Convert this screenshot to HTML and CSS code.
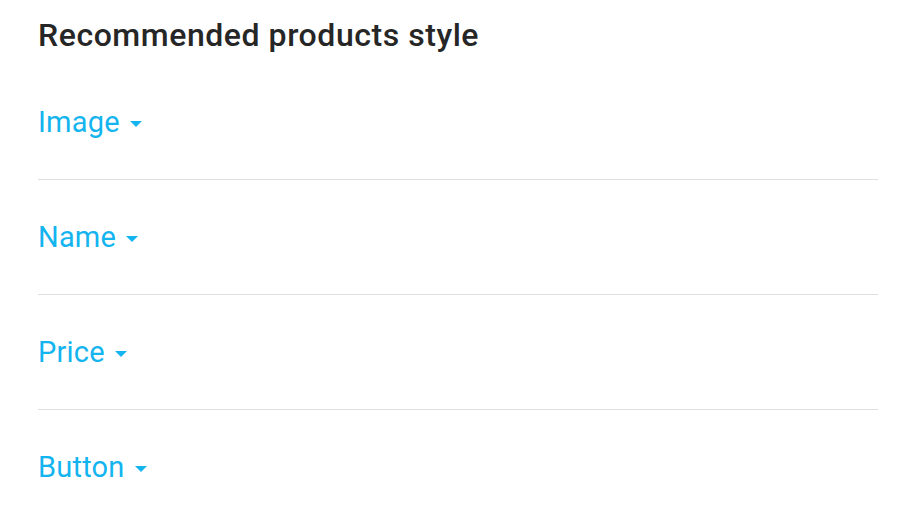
FILE: index.html
```html
<!DOCTYPE html>
<html>
<head>
<meta charset="utf-8">
<link rel="stylesheet" href="styles.css">
</head>
<body>
<div class="panel">
  <h1 class="title">Recommended products style</h1>
  <div class="section"><span class="label">Image</span><span class="caret"></span></div>
  <div class="section"><span class="label">Name</span><span class="caret"></span></div>
  <div class="section"><span class="label">Price</span><span class="caret"></span></div>
  <div class="section last"><span class="label">Button</span><span class="caret"></span></div>
</div>
</body>
</html>
```
FILE: styles.css
```css
html, body {
  margin: 0;
  padding: 0;
  background: #ffffff;
  font-family: Roboto, "Noto Sans", sans-serif;
}
.panel {
  width: 840px;
  padding: 15px 38px 0 38px;
}
.title {
  margin: 0 0 10px 0;
  font-size: 32px;
  font-weight: 500;
  color: #262626;
  line-height: 40px;
  letter-spacing: 0.55px;
}
.section {
  display: flex;
  align-items: center;
  height: 114px;
  border-bottom: 1px solid #e0e0e0;
}
.section.last {
  border-bottom: none;
}
.label {
  font-size: 29px;
  color: #14b4ef;
  line-height: 34px;
  letter-spacing: 0.2px;
}
.caret {
  width: 0;
  height: 0;
  margin-left: 10px;
  margin-top: 4px;
  border-left: 6px solid transparent;
  border-right: 6px solid transparent;
  border-top: 6px solid #14b4ef;
}
```
